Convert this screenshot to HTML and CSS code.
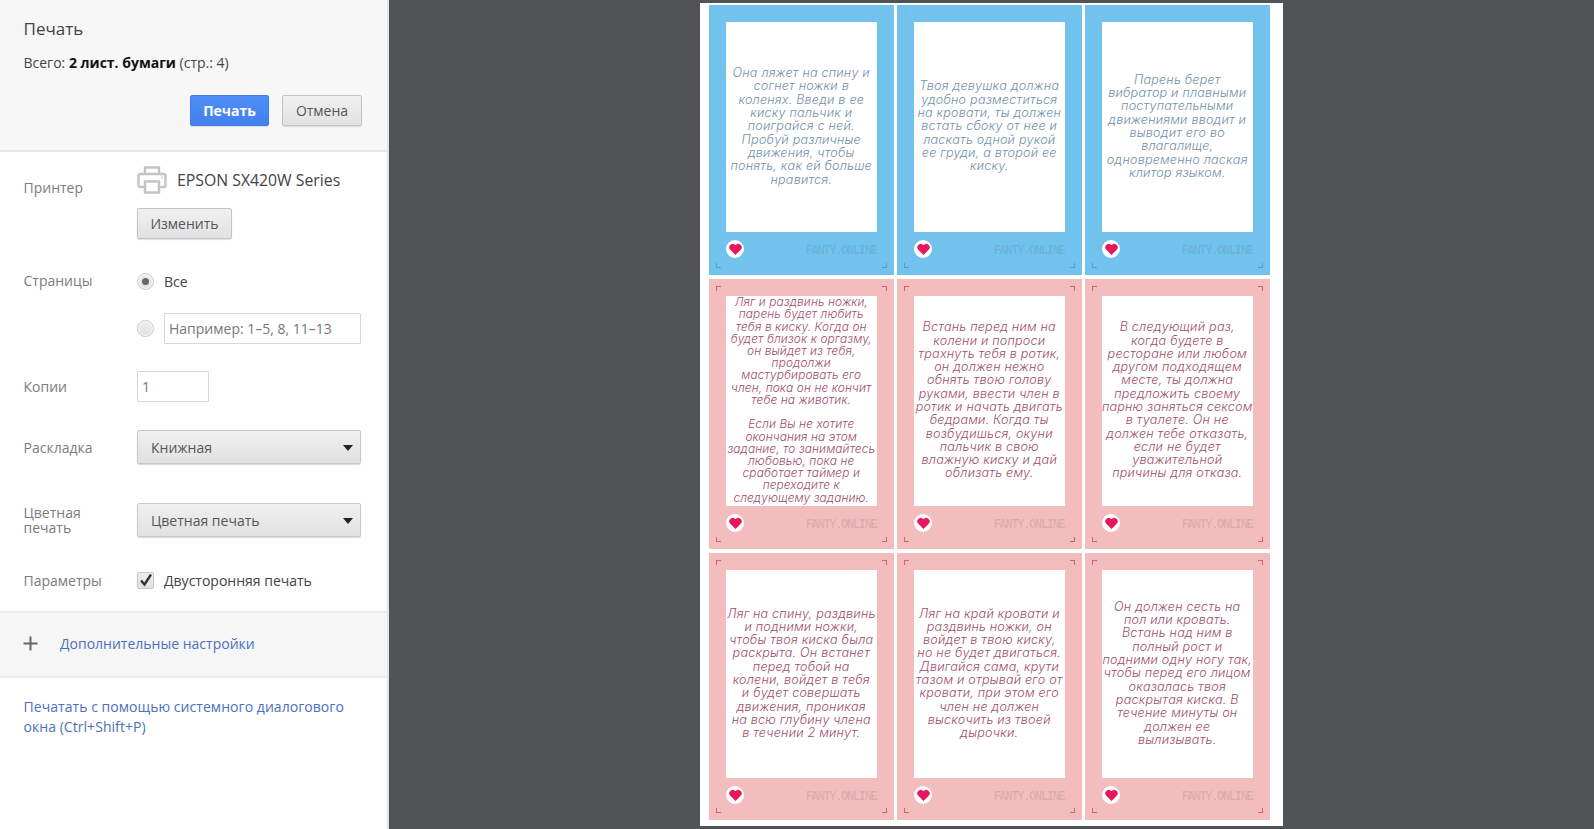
FILE: index.html
```html
<!DOCTYPE html>
<html lang="ru">

<head>
    <meta charset="UTF-8">
    <meta name="viewport" content="width=device-width, initial-scale=1.0">
    <title>Печать</title>
    <link rel="stylesheet" href="styles.css">
</head>

<body>
    <aside class="sidebar">
        <header class="head">
            <h1 class="head-title">Печать</h1>
            <p class="head-total">Всего: <b>2 лист. бумаги</b> (стр.: 4)</p>
            <div class="head-buttons">
                <div class="btn btn-print">Печать</div>
                <div class="btn btn-cancel">Отмена</div>
            </div>
        </header>

        <section class="settings">
            <div class="row row-printer">
                <div class="label">Принтер</div>
                <div class="field">
                    <div class="printer">
                        <svg class="printer-icon" width="30" height="30" viewBox="0 0 30 30" fill="none" stroke="#c4c4c4" stroke-width="2.4">
                            <path d="M8 9V2.5h14V9"/>
                            <path d="M7 22H3.5a2 2 0 0 1-2-2V11a2 2 0 0 1 2-2h23a2 2 0 0 1 2 2v9a2 2 0 0 1-2 2H23"/>
                            <path d="M8 16.5h14v11H8z"/>
                            <path d="M24 12.500h2" stroke="#d8d8d8"/>
                        </svg>
                        <span class="printer-name">EPSON SX420W Series</span>
                    </div>
                    <div class="btn btn-change">Изменить</div>
                </div>
            </div>

            <div class="row row-pages">
                <div class="label">Страницы</div>
                <div class="field">
                    <div class="option">
                        <span class="radio radio-on"></span>
                        <span class="option-text">Все</span>
                    </div>
                    <div class="option option-range">
                        <span class="radio"></span>
                        <div class="input input-range">Например: 1–5, 8, 11–13</div>
                    </div>
                </div>
            </div>

            <div class="row row-copies">
                <div class="label">Копии</div>
                <div class="input input-copies">1</div>
            </div>

            <div class="row row-layout">
                <div class="label">Раскладка</div>
                <div class="select">Книжная</div>
            </div>

            <div class="row row-color">
                <div class="label">Цветная<br>печать</div>
                <div class="select">Цветная печать</div>
            </div>

            <div class="row row-options">
                <div class="label">Параметры</div>
                <div class="option">
                    <span class="check">
                        <svg width="14" height="14" viewBox="0 0 14 14"><path d="M2 7.500l3.500 4L12 1.500" fill="none" stroke="#333" stroke-width="2.300"/></svg>
                    </span>
                    <span class="option-text">Двусторонняя печать</span>
                </div>
            </div>
        </section>

        <div class="more">
            <svg width="15" height="15" viewBox="0 0 15 15"><path d="M7.500 0.500v14M0.500 7.500h14" stroke="#666" stroke-width="2"/></svg>
            <span class="link">Дополнительные настройки</span>
        </div>

        <div class="system link">Печатать с помощью системного диалогового<br>окна (Ctrl+Shift+P)</div>
    </aside>

    <main class="preview">
        <div class="sheet">
            <!-- ряд 1 -->
            <article class="card card-blue">
                <div class="card-text">Она ляжет на спину и<br>согнет ножки в<br>коленях. Введи в ее<br>киску пальчик и<br>поиграйся с ней.<br>Пробуй различные<br>движения, чтобы<br>понять, как ей больше<br>нравится.</div>
                <div class="card-foot"><span class="heart"><svg width="13" height="12" viewBox="0 0 12 11"><path d="M6 11L1 6a3 3 0 0 1 5-4 3 3 0 0 1 5 4z" fill="#e8175d"/></svg></span><span class="brand">FANTY.ONLINE</span></div>
                <i class="mark mark-tl"></i><i class="mark mark-tr"></i><i class="mark mark-bl"></i><i class="mark mark-br"></i>
            </article>
            <article class="card card-blue">
                <div class="card-text">Твоя девушка должна<br>удобно разместиться<br>на кровати, ты должен<br>встать сбоку от нее и<br>ласкать одной рукой<br>ее груди, а второй ее<br>киску.</div>
                <div class="card-foot"><span class="heart"><svg width="13" height="12" viewBox="0 0 12 11"><path d="M6 11L1 6a3 3 0 0 1 5-4 3 3 0 0 1 5 4z" fill="#e8175d"/></svg></span><span class="brand">FANTY.ONLINE</span></div>
                <i class="mark mark-tl"></i><i class="mark mark-tr"></i><i class="mark mark-bl"></i><i class="mark mark-br"></i>
            </article>
            <article class="card card-blue">
                <div class="card-text">Парень берет<br>вибратор и плавными<br>поступательными<br>движениями вводит и<br>выводит его во<br>влагалище,<br>одновременно лаская<br>клитор языком.</div>
                <div class="card-foot"><span class="heart"><svg width="13" height="12" viewBox="0 0 12 11"><path d="M6 11L1 6a3 3 0 0 1 5-4 3 3 0 0 1 5 4z" fill="#e8175d"/></svg></span><span class="brand">FANTY.ONLINE</span></div>
                <i class="mark mark-tl"></i><i class="mark mark-tr"></i><i class="mark mark-bl"></i><i class="mark mark-br"></i>
            </article>

            <!-- ряд 2 -->
            <article class="card card-pink card-dense">
                <div class="card-text">Ляг и раздвинь ножки,<br>парень будет любить<br>тебя в киску. Когда он<br>будет близок к оргазму,<br>он выйдет из тебя,<br>продолжи<br>мастурбировать его<br>член, пока он не кончит<br>тебе на животик.<br><br>Если Вы не хотите<br>окончания на этом<br>задание, то занимайтесь<br>любовью, пока не<br>сработает таймер и<br>переходите к<br>следующему заданию.</div>
                <div class="card-foot"><span class="heart"><svg width="13" height="12" viewBox="0 0 12 11"><path d="M6 11L1 6a3 3 0 0 1 5-4 3 3 0 0 1 5 4z" fill="#e8175d"/></svg></span><span class="brand">FANTY.ONLINE</span></div>
                <i class="mark mark-tl"></i><i class="mark mark-tr"></i><i class="mark mark-bl"></i><i class="mark mark-br"></i>
            </article>
            <article class="card card-pink">
                <div class="card-text">Встань перед ним на<br>колени и попроси<br>трахнуть тебя в ротик,<br>он должен нежно<br>обнять твою голову<br>руками, ввести член в<br>ротик и начать двигать<br>бедрами. Когда ты<br>возбудишься, окуни<br>пальчик в свою<br>влажную киску и дай<br>облизать ему.</div>
                <div class="card-foot"><span class="heart"><svg width="13" height="12" viewBox="0 0 12 11"><path d="M6 11L1 6a3 3 0 0 1 5-4 3 3 0 0 1 5 4z" fill="#e8175d"/></svg></span><span class="brand">FANTY.ONLINE</span></div>
                <i class="mark mark-tl"></i><i class="mark mark-tr"></i><i class="mark mark-bl"></i><i class="mark mark-br"></i>
            </article>
            <article class="card card-pink">
                <div class="card-text">В следующий раз,<br>когда будете в<br>ресторане или любом<br>другом подходящем<br>месте, ты должна<br>предложить своему<br>парню заняться сексом<br>в туалете. Он не<br>должен тебе отказать,<br>если не будет<br>уважительной<br>причины для отказа.</div>
                <div class="card-foot"><span class="heart"><svg width="13" height="12" viewBox="0 0 12 11"><path d="M6 11L1 6a3 3 0 0 1 5-4 3 3 0 0 1 5 4z" fill="#e8175d"/></svg></span><span class="brand">FANTY.ONLINE</span></div>
                <i class="mark mark-tl"></i><i class="mark mark-tr"></i><i class="mark mark-bl"></i><i class="mark mark-br"></i>
            </article>

            <!-- ряд 3 -->
            <article class="card card-pink card-last">
                <div class="card-text">Ляг на спину, раздвинь<br>и подними ножки,<br>чтобы твоя киска была<br>раскрыта. Он встанет<br>перед тобой на<br>колени, войдет в тебя<br>и будет совершать<br>движения, проникая<br>на всю глубину члена<br>в течении 2 минут.</div>
                <div class="card-foot"><span class="heart"><svg width="13" height="12" viewBox="0 0 12 11"><path d="M6 11L1 6a3 3 0 0 1 5-4 3 3 0 0 1 5 4z" fill="#e8175d"/></svg></span><span class="brand">FANTY.ONLINE</span></div>
                <i class="mark mark-tl"></i><i class="mark mark-tr"></i><i class="mark mark-bl"></i><i class="mark mark-br"></i>
            </article>
            <article class="card card-pink card-last">
                <div class="card-text">Ляг на край кровати и<br>раздвинь ножки, он<br>войдет в твою киску,<br>но не будет двигаться.<br>Двигайся сама, крути<br>тазом и отрывай его от<br>кровати, при этом его<br>член не должен<br>выскочить из твоей<br>дырочки.</div>
                <div class="card-foot"><span class="heart"><svg width="13" height="12" viewBox="0 0 12 11"><path d="M6 11L1 6a3 3 0 0 1 5-4 3 3 0 0 1 5 4z" fill="#e8175d"/></svg></span><span class="brand">FANTY.ONLINE</span></div>
                <i class="mark mark-tl"></i><i class="mark mark-tr"></i><i class="mark mark-bl"></i><i class="mark mark-br"></i>
            </article>
            <article class="card card-pink card-last">
                <div class="card-text">Он должен сесть на<br>пол или кровать.<br>Встань над ним в<br>полный рост и<br>подними одну ногу так,<br>чтобы перед его лицом<br>оказалась твоя<br>раскрытая киска. В<br>течение минуты он<br>должен ее<br>вылизывать.</div>
                <div class="card-foot"><span class="heart"><svg width="13" height="12" viewBox="0 0 12 11"><path d="M6 11L1 6a3 3 0 0 1 5-4 3 3 0 0 1 5 4z" fill="#e8175d"/></svg></span><span class="brand">FANTY.ONLINE</span></div>
                <i class="mark mark-tl"></i><i class="mark mark-tr"></i><i class="mark mark-bl"></i><i class="mark mark-br"></i>
            </article>
        </div>
    </main>
</body>

</html>
```

FILE: styles.css
```css
* {
    box-sizing: border-box;
}

html, body {
    height: 829px;
    overflow: hidden;
}

body {
    margin: 0;
    display: flex;
    background-color: #505457;
    font-family: "Open Sans", "Noto Sans", sans-serif;
    font-size: 14px;
    color: #333;
}

/* боковая панель */
.sidebar {
    width: 389px;
    flex-shrink: 0;
    background-color: #fefefe;
    border-right: 2px solid #e4e4e4;
}

.head {
    height: 152px;
    padding: 17px 25px 0 23.500px;
    background-color: #f7f7f7;
    border-bottom: 2px solid #e8e8e8;
}

.head-title {
    margin: 0;
    font-size: 17px;
    font-weight: 400;
    line-height: 23px;
    color: #444;
}

.head-total {
    margin: 13px 0 0;
    line-height: 20px;
    color: #444;
}

.head-total b {
    color: #111;
}

.head-buttons {
    display: flex;
    justify-content: flex-end;
    gap: 13px;
    margin-top: 22px;
}

.btn {
    display: flex;
    justify-content: center;
    align-items: center;
    height: 31px;
    border: 1px solid #c4c4c4;
    border-radius: 2px;
    background: linear-gradient(#f0f0f0, #e2e2e2);
    box-shadow: 0 1px 1px rgba(0, 0, 0, 0.12);
    color: #555;
}

.btn-print {
    width: 79px;
    border-color: #3f7de8;
    background: linear-gradient(#4f8ff5, #437fee);
    color: #fff;
    font-weight: 700;
}

.btn-cancel {
    width: 80px;
}

.btn-change {
    width: 95px;
    margin-top: 13px;
}

.settings {
    height: 461px;
    padding: 0 26px 0 23.500px;
    border-bottom: 2px solid #ececec;
}

.row {
    display: flex;
}

.label {
    width: 113.500px;
    flex-shrink: 0;
    color: #7c7c7c;
    line-height: 15px;
}

.field {
    flex: 1;
}

.row-printer {
    padding-top: 13px;
}

.row-printer .label {
    padding-top: 15px;
}

.printer {
    display: flex;
    align-items: center;
    gap: 10px;
    height: 30px;
}

.printer-name {
    font-size: 15.800px;
    color: #444;
}

.row-pages {
    margin-top: 33px;
}

.row-pages .label {
    padding-top: 1px;
}

.option {
    display: flex;
    align-items: center;
    gap: 10px;
    height: 18px;
    color: #444;
}

.option-range {
    height: 31px;
    margin-top: 23px;
}

.radio {
    width: 17px;
    height: 17px;
    flex-shrink: 0;
    display: flex;
    justify-content: center;
    align-items: center;
    border: 1px solid #c8c8c8;
    border-radius: 50%;
    background: linear-gradient(#eee, #e2e2e2);
    box-shadow: inset 0 0 0 1px #fafafa;
}

.radio-on::after {
    content: "";
    width: 7px;
    height: 7px;
    border-radius: 50%;
    background-color: #666;
}

.input {
    display: flex;
    align-items: center;
    height: 31px;
    padding-left: 4px;
    background-color: #fff;
    border: 1px solid #d6d6d6;
    border-radius: 1px;
    color: #777;
}

.input-range {
    width: 197px;
}

.input-copies {
    width: 72px;
}

.row-copies {
    margin-top: 27px;
    align-items: center;
}

.select {
    position: relative;
    display: flex;
    align-items: center;
    width: 225px;
    height: 34px;
    padding-left: 13px;
    border: 1px solid #c9c9c9;
    border-radius: 2px;
    background: linear-gradient(#f0f0f0, #e1e1e1);
    box-shadow: 0 1px 1px rgba(0, 0, 0, 0.15);
    color: #555;
}

.select::after {
    content: "";
    position: absolute;
    right: 7px;
    top: 14px;
    border-style: solid;
    border-width: 6px 5px 0;
    border-color: #222 transparent transparent;
}

.row-layout {
    margin-top: 28px;
    align-items: center;
}

.row-color {
    margin-top: 39px;
    align-items: center;
}

.row-options {
    margin-top: 34px;
    align-items: center;
}

.check {
    width: 17px;
    height: 17px;
    flex-shrink: 0;
    display: flex;
    justify-content: center;
    align-items: center;
    border: 1px solid #c8c8c8;
    border-radius: 2px;
    background: linear-gradient(#eee, #e0e0e0);
}

.more {
    display: flex;
    align-items: center;
    gap: 22px;
    height: 65px;
    padding: 0 0 3px 23px;
    background-color: #f6f6f6;
    border-bottom: 2px solid #ececec;
}

.link {
    color: #4c70c0;
}

.system {
    padding: 19px 24px 0 23.500px;
    line-height: 20px;
    letter-spacing: 0.05px;
}

/* предпросмотр */
.preview {
    flex: 1;
    display: flex;
    justify-content: center;
    align-items: flex-start;
    padding-top: 3px;
}

.sheet {
    width: 583px;
    height: 823px;
    padding: 2px 0 0 9px;
    display: grid;
    grid-template-columns: repeat(3, 184.500px);
    grid-template-rows: 270px 270px 267px;
    column-gap: 3.500px;
    row-gap: 4px;
    background-color: #fff;
}

.card {
    position: relative;
    display: flex;
    flex-direction: column;
    padding: 17px 17px 0;
}

.card-blue {
    background-color: #71c3ee;
    color: #7391ab;
}

.card-pink {
    background-color: #f3bdbd;
    color: #a04f6c;
}

.card-text {
    height: 210px;
    padding-bottom: 2px;
    display: flex;
    justify-content: center;
    align-items: center;
    background-color: #fff;
    font-family: "Inter", "Open Sans", sans-serif;
    font-style: italic;
    font-weight: 300;
    font-size: 12.600px;
    line-height: 13.300px;
    letter-spacing: 0.2px;
    text-align: center;
    white-space: nowrap;
}

.card-dense .card-text {
    font-size: 11.900px;
    line-height: 12.200px;
    letter-spacing: 0.1px;
}

.card-last .card-text {
    height: 208px;
}

.card-foot {
    display: flex;
    justify-content: space-between;
    align-items: center;
    margin-top: 7px;
    height: 20px;
}

.heart {
    width: 18px;
    height: 18px;
    display: flex;
    justify-content: center;
    align-items: center;
    border-radius: 50%;
    background-color: #fff;
}

.brand {
    padding-top: 3px;
    font-family: "Liberation Mono", monospace;
    font-weight: 700;
    font-size: 12px;
    letter-spacing: -1.300px;
    color: rgba(60, 60, 60, 0.12);
}

/* метки обреза */
.mark {
    position: absolute;
    width: 5px;
    height: 5px;
    border: 0 solid #d9606f;
}

.card-blue .mark {
    border-color: #5a9fca;
}

.mark-tl {
    top: 7px;
    left: 7px;
    border-width: 1px 0 0 1px;
}

.mark-tr {
    top: 7px;
    right: 7px;
    border-width: 1px 1px 0 0;
}

.mark-bl {
    bottom: 7px;
    left: 7px;
    border-width: 0 0 1px 1px;
}

.mark-br {
    bottom: 7px;
    right: 7px;
    border-width: 0 1px 1px 0;
}

.card-blue .mark-tl,
.card-blue .mark-tr {
    opacity: 0.15;
}
```
